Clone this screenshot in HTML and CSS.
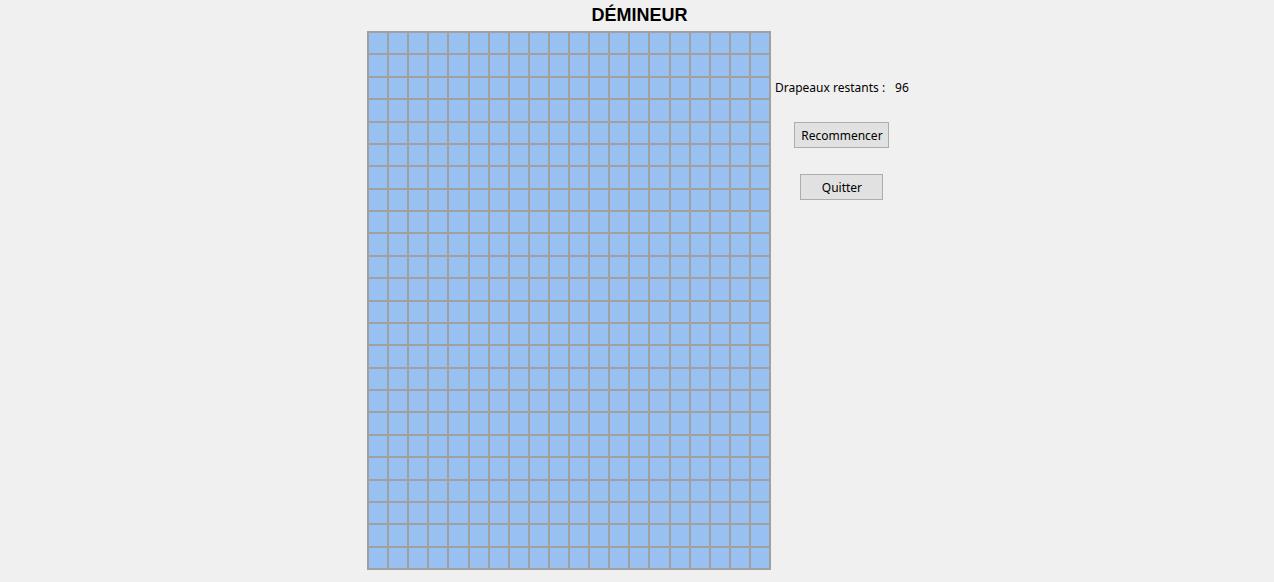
FILE: index.html
```html
<!DOCTYPE html>
<html lang="fr">
<head>
<meta charset="utf-8">
<title>Démineur</title>
<link rel="stylesheet" href="styles.css">
</head>
<body>
<h1 class="title">DÉMINEUR</h1>
<div class="main">
  <div class="board">
    <div class="row"><span class="c"></span><span class="c"></span><span class="c"></span><span class="c"></span><span class="c"></span><span class="c"></span><span class="c"></span><span class="c"></span><span class="c"></span><span class="c"></span><span class="c"></span><span class="c"></span><span class="c"></span><span class="c"></span><span class="c"></span><span class="c"></span><span class="c"></span><span class="c"></span><span class="c"></span><span class="c"></span></div>
    <div class="row"><span class="c"></span><span class="c"></span><span class="c"></span><span class="c"></span><span class="c"></span><span class="c"></span><span class="c"></span><span class="c"></span><span class="c"></span><span class="c"></span><span class="c"></span><span class="c"></span><span class="c"></span><span class="c"></span><span class="c"></span><span class="c"></span><span class="c"></span><span class="c"></span><span class="c"></span><span class="c"></span></div>
    <div class="row"><span class="c"></span><span class="c"></span><span class="c"></span><span class="c"></span><span class="c"></span><span class="c"></span><span class="c"></span><span class="c"></span><span class="c"></span><span class="c"></span><span class="c"></span><span class="c"></span><span class="c"></span><span class="c"></span><span class="c"></span><span class="c"></span><span class="c"></span><span class="c"></span><span class="c"></span><span class="c"></span></div>
    <div class="row"><span class="c"></span><span class="c"></span><span class="c"></span><span class="c"></span><span class="c"></span><span class="c"></span><span class="c"></span><span class="c"></span><span class="c"></span><span class="c"></span><span class="c"></span><span class="c"></span><span class="c"></span><span class="c"></span><span class="c"></span><span class="c"></span><span class="c"></span><span class="c"></span><span class="c"></span><span class="c"></span></div>
    <div class="row"><span class="c"></span><span class="c"></span><span class="c"></span><span class="c"></span><span class="c"></span><span class="c"></span><span class="c"></span><span class="c"></span><span class="c"></span><span class="c"></span><span class="c"></span><span class="c"></span><span class="c"></span><span class="c"></span><span class="c"></span><span class="c"></span><span class="c"></span><span class="c"></span><span class="c"></span><span class="c"></span></div>
    <div class="row"><span class="c"></span><span class="c"></span><span class="c"></span><span class="c"></span><span class="c"></span><span class="c"></span><span class="c"></span><span class="c"></span><span class="c"></span><span class="c"></span><span class="c"></span><span class="c"></span><span class="c"></span><span class="c"></span><span class="c"></span><span class="c"></span><span class="c"></span><span class="c"></span><span class="c"></span><span class="c"></span></div>
    <div class="row"><span class="c"></span><span class="c"></span><span class="c"></span><span class="c"></span><span class="c"></span><span class="c"></span><span class="c"></span><span class="c"></span><span class="c"></span><span class="c"></span><span class="c"></span><span class="c"></span><span class="c"></span><span class="c"></span><span class="c"></span><span class="c"></span><span class="c"></span><span class="c"></span><span class="c"></span><span class="c"></span></div>
    <div class="row"><span class="c"></span><span class="c"></span><span class="c"></span><span class="c"></span><span class="c"></span><span class="c"></span><span class="c"></span><span class="c"></span><span class="c"></span><span class="c"></span><span class="c"></span><span class="c"></span><span class="c"></span><span class="c"></span><span class="c"></span><span class="c"></span><span class="c"></span><span class="c"></span><span class="c"></span><span class="c"></span></div>
    <div class="row"><span class="c"></span><span class="c"></span><span class="c"></span><span class="c"></span><span class="c"></span><span class="c"></span><span class="c"></span><span class="c"></span><span class="c"></span><span class="c"></span><span class="c"></span><span class="c"></span><span class="c"></span><span class="c"></span><span class="c"></span><span class="c"></span><span class="c"></span><span class="c"></span><span class="c"></span><span class="c"></span></div>
    <div class="row"><span class="c"></span><span class="c"></span><span class="c"></span><span class="c"></span><span class="c"></span><span class="c"></span><span class="c"></span><span class="c"></span><span class="c"></span><span class="c"></span><span class="c"></span><span class="c"></span><span class="c"></span><span class="c"></span><span class="c"></span><span class="c"></span><span class="c"></span><span class="c"></span><span class="c"></span><span class="c"></span></div>
    <div class="row"><span class="c"></span><span class="c"></span><span class="c"></span><span class="c"></span><span class="c"></span><span class="c"></span><span class="c"></span><span class="c"></span><span class="c"></span><span class="c"></span><span class="c"></span><span class="c"></span><span class="c"></span><span class="c"></span><span class="c"></span><span class="c"></span><span class="c"></span><span class="c"></span><span class="c"></span><span class="c"></span></div>
    <div class="row"><span class="c"></span><span class="c"></span><span class="c"></span><span class="c"></span><span class="c"></span><span class="c"></span><span class="c"></span><span class="c"></span><span class="c"></span><span class="c"></span><span class="c"></span><span class="c"></span><span class="c"></span><span class="c"></span><span class="c"></span><span class="c"></span><span class="c"></span><span class="c"></span><span class="c"></span><span class="c"></span></div>
    <div class="row"><span class="c"></span><span class="c"></span><span class="c"></span><span class="c"></span><span class="c"></span><span class="c"></span><span class="c"></span><span class="c"></span><span class="c"></span><span class="c"></span><span class="c"></span><span class="c"></span><span class="c"></span><span class="c"></span><span class="c"></span><span class="c"></span><span class="c"></span><span class="c"></span><span class="c"></span><span class="c"></span></div>
    <div class="row"><span class="c"></span><span class="c"></span><span class="c"></span><span class="c"></span><span class="c"></span><span class="c"></span><span class="c"></span><span class="c"></span><span class="c"></span><span class="c"></span><span class="c"></span><span class="c"></span><span class="c"></span><span class="c"></span><span class="c"></span><span class="c"></span><span class="c"></span><span class="c"></span><span class="c"></span><span class="c"></span></div>
    <div class="row"><span class="c"></span><span class="c"></span><span class="c"></span><span class="c"></span><span class="c"></span><span class="c"></span><span class="c"></span><span class="c"></span><span class="c"></span><span class="c"></span><span class="c"></span><span class="c"></span><span class="c"></span><span class="c"></span><span class="c"></span><span class="c"></span><span class="c"></span><span class="c"></span><span class="c"></span><span class="c"></span></div>
    <div class="row"><span class="c"></span><span class="c"></span><span class="c"></span><span class="c"></span><span class="c"></span><span class="c"></span><span class="c"></span><span class="c"></span><span class="c"></span><span class="c"></span><span class="c"></span><span class="c"></span><span class="c"></span><span class="c"></span><span class="c"></span><span class="c"></span><span class="c"></span><span class="c"></span><span class="c"></span><span class="c"></span></div>
    <div class="row"><span class="c"></span><span class="c"></span><span class="c"></span><span class="c"></span><span class="c"></span><span class="c"></span><span class="c"></span><span class="c"></span><span class="c"></span><span class="c"></span><span class="c"></span><span class="c"></span><span class="c"></span><span class="c"></span><span class="c"></span><span class="c"></span><span class="c"></span><span class="c"></span><span class="c"></span><span class="c"></span></div>
    <div class="row"><span class="c"></span><span class="c"></span><span class="c"></span><span class="c"></span><span class="c"></span><span class="c"></span><span class="c"></span><span class="c"></span><span class="c"></span><span class="c"></span><span class="c"></span><span class="c"></span><span class="c"></span><span class="c"></span><span class="c"></span><span class="c"></span><span class="c"></span><span class="c"></span><span class="c"></span><span class="c"></span></div>
    <div class="row"><span class="c"></span><span class="c"></span><span class="c"></span><span class="c"></span><span class="c"></span><span class="c"></span><span class="c"></span><span class="c"></span><span class="c"></span><span class="c"></span><span class="c"></span><span class="c"></span><span class="c"></span><span class="c"></span><span class="c"></span><span class="c"></span><span class="c"></span><span class="c"></span><span class="c"></span><span class="c"></span></div>
    <div class="row"><span class="c"></span><span class="c"></span><span class="c"></span><span class="c"></span><span class="c"></span><span class="c"></span><span class="c"></span><span class="c"></span><span class="c"></span><span class="c"></span><span class="c"></span><span class="c"></span><span class="c"></span><span class="c"></span><span class="c"></span><span class="c"></span><span class="c"></span><span class="c"></span><span class="c"></span><span class="c"></span></div>
    <div class="row"><span class="c"></span><span class="c"></span><span class="c"></span><span class="c"></span><span class="c"></span><span class="c"></span><span class="c"></span><span class="c"></span><span class="c"></span><span class="c"></span><span class="c"></span><span class="c"></span><span class="c"></span><span class="c"></span><span class="c"></span><span class="c"></span><span class="c"></span><span class="c"></span><span class="c"></span><span class="c"></span></div>
    <div class="row"><span class="c"></span><span class="c"></span><span class="c"></span><span class="c"></span><span class="c"></span><span class="c"></span><span class="c"></span><span class="c"></span><span class="c"></span><span class="c"></span><span class="c"></span><span class="c"></span><span class="c"></span><span class="c"></span><span class="c"></span><span class="c"></span><span class="c"></span><span class="c"></span><span class="c"></span><span class="c"></span></div>
    <div class="row"><span class="c"></span><span class="c"></span><span class="c"></span><span class="c"></span><span class="c"></span><span class="c"></span><span class="c"></span><span class="c"></span><span class="c"></span><span class="c"></span><span class="c"></span><span class="c"></span><span class="c"></span><span class="c"></span><span class="c"></span><span class="c"></span><span class="c"></span><span class="c"></span><span class="c"></span><span class="c"></span></div>
    <div class="row"><span class="c"></span><span class="c"></span><span class="c"></span><span class="c"></span><span class="c"></span><span class="c"></span><span class="c"></span><span class="c"></span><span class="c"></span><span class="c"></span><span class="c"></span><span class="c"></span><span class="c"></span><span class="c"></span><span class="c"></span><span class="c"></span><span class="c"></span><span class="c"></span><span class="c"></span><span class="c"></span></div>
  </div>
  <div class="panel">
    <div class="flags"><span class="flags-label">Drapeaux restants :</span><span class="flags-count">96</span></div>
    <button class="btn btn-restart" type="button">Recommencer</button>
    <button class="btn btn-quit" type="button">Quitter</button>
  </div>
</div>
</body>
</html>
```

FILE: styles.css
```css
html, body {
  margin: 0;
  padding: 0;
  background: #f0f0f0;
}

body {
  width: 1274px;
  height: 582px;
  overflow: hidden;
  font-family: "Noto Sans", "Open Sans", sans-serif;
  color: #000;
}

.title {
  margin: 0;
  height: 31px;
  padding-top: 5px;
  box-sizing: border-box;
  text-align: center;
  font-family: "Liberation Sans", Arial, sans-serif;
  font-weight: bold;
  font-size: 18px;
  line-height: 21px;
  padding-left: 5px;
}

.main {
  display: flex;
  align-items: flex-start;
  padding-left: 367px;
  gap: 4px;
}

.board {
  width: 404px;
  height: 539px;
  box-sizing: border-box;
  background: #a0a0a0;
  padding: 2px;
  display: grid;
  grid-template-rows: repeat(24, 1fr);
  row-gap: 2px;
}

.row {
  display: grid;
  grid-template-columns: repeat(20, 1fr);
  column-gap: 2px;
}

.c {
  display: block;
  background: #98c1f2;
}

.panel {
  display: flex;
  flex-direction: column;
  align-items: center;
  padding-top: 48px;
}

.flags {
  font-size: 12px;
  line-height: 18px;
  display: flex;
  gap: 10px;
  white-space: nowrap;
}

.btn {
  font-family: "Noto Sans", "Open Sans", sans-serif;
  font-size: 12px;
  line-height: 16px;
  color: #000;
  background: #e1e1e1;
  border: 1px solid #adadad;
  border-radius: 0;
  padding: 1px 0 0;
  height: 26px;
  box-sizing: border-box;
}

.btn-restart {
  width: 95px;
  margin-top: 25px;
}

.btn-quit {
  width: 83px;
  margin-top: 26px;
}
```
